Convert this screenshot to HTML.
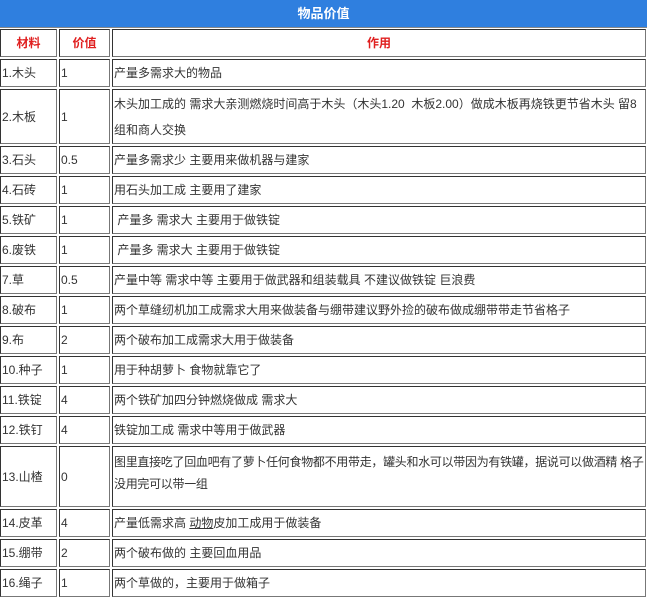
<!DOCTYPE html>
<html><head><meta charset="utf-8"><style>
body{margin:0;width:648px;height:590px;overflow:hidden;background:#fff;font-family:"Liberation Sans","Noto Sans CJK SC",sans-serif;font-size:12px;color:#333}
.t{height:27px;background:#2f7fdf;color:#fff;font-weight:bold;text-align:center;line-height:27px;font-size:13px;border-bottom:1px solid #888;width:647px}
table{border-collapse:separate;border-spacing:2px;margin:-1px 0 0 -2px;width:650px;table-layout:fixed}
td{border:1px solid #333;border-right-color:#777;border-bottom-color:#777;height:26px;padding:0 1px;vertical-align:middle;line-height:26px}
td.h{color:#e02020;text-align:center;font-weight:bold}
tr.d td{height:53px}
tr.e td{height:55px}
</style></head><body>
<div class="t">物品价值</div>
<table>
<col style="width:57px"><col style="width:51px"><col>
<tr><td class="h">材料</td><td class="h">价值</td><td class="h">作用</td></tr>
<tr><td>1.木头</td><td>1</td><td>产量多需求大的物品</td></tr>
<tr class="d"><td>2.木板</td><td>1</td><td>木头加工成的 需求大亲测燃烧时间高于木头（木头1.20&nbsp; 木板2.00）做成木板再烧铁更节省木头 留8组和商人交换</td></tr>
<tr><td>3.石头</td><td>0.5</td><td>产量多需求少 主要用来做机器与建家</td></tr>
<tr><td>4.石砖</td><td>1</td><td>用石头加工成 主要用了建家</td></tr>
<tr><td>5.铁矿</td><td>1</td><td>&nbsp;产量多 需求大 主要用于做铁锭</td></tr>
<tr><td>6.废铁</td><td>1</td><td>&nbsp;产量多 需求大 主要用于做铁锭</td></tr>
<tr><td>7.草</td><td>0.5</td><td>产量中等 需求中等 主要用于做武器和组装载具 不建议做铁锭 巨浪费</td></tr>
<tr><td>8.破布</td><td>1</td><td>两个草缝纫机加工成需求大用来做装备与绷带建议野外捡的破布做成绷带带走节省格子</td></tr>
<tr><td>9.布</td><td>2</td><td>两个破布加工成需求大用于做装备</td></tr>
<tr><td>10.种子</td><td>1</td><td>用于种胡萝卜 食物就靠它了</td></tr>
<tr><td>11.铁锭</td><td>4</td><td>两个铁矿加四分钟燃烧做成 需求大</td></tr>
<tr><td>12.铁钉</td><td>4</td><td>铁锭加工成 需求中等用于做武器</td></tr>
<tr class="e"><td>13.山楂</td><td>0</td><td style="line-height:22px;vertical-align:top;padding-top:4px;letter-spacing:-0.3px">图里直接吃了回血吧有了萝卜任何食物都不用带走，罐头和水可以带因为有铁罐，据说可以做酒精 格子没用完可以带一组</td></tr>
<tr><td>14.皮革</td><td>4</td><td>产量低需求高 <u>动物</u>皮加工成用于做装备</td></tr>
<tr><td>15.绷带</td><td>2</td><td>两个破布做的 主要回血用品</td></tr>
<tr><td>16.绳子</td><td>1</td><td>两个草做的，主要用于做箱子</td></tr>
</table>
</body></html>
